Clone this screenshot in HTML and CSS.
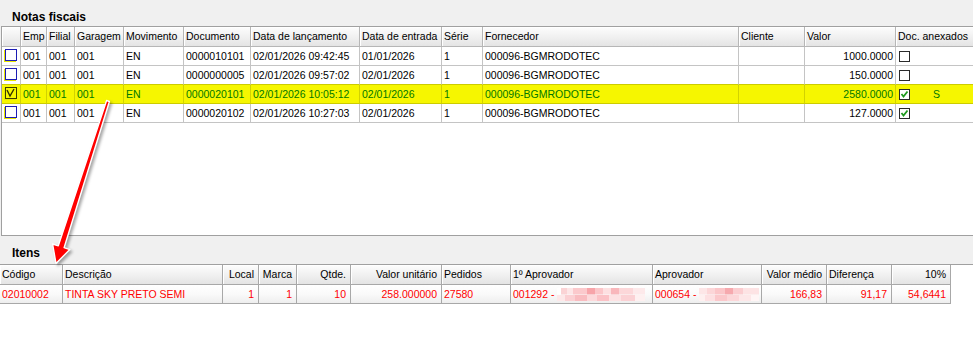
FILE: index.html
```html
<!DOCTYPE html>
<html lang="pt-BR">

<head>
    <meta charset="UTF-8">
    <title>Notas fiscais</title>
    <link rel="stylesheet" href="styles.css">
</head>

<body>
    <div class="sectionTitle">Notas fiscais</div>

    <div class="notas">
        <div class="row head">
            <div class="c ind"></div>
            <div class="c emp">Emp</div>
            <div class="c fil">Filial</div>
            <div class="c gar">Garagem</div>
            <div class="c mov">Movimento</div>
            <div class="c doc">Documento</div>
            <div class="c dlan">Data de lançamento</div>
            <div class="c dent">Data de entrada</div>
            <div class="c ser">Série</div>
            <div class="c forn">Fornecedor</div>
            <div class="c cli">Cliente</div>
            <div class="c val">Valor</div>
            <div class="c anx">Doc. anexados</div>
        </div>

        <div class="row">
            <div class="c ind"><span class="mark"></span></div>
            <div class="c emp">001</div>
            <div class="c fil">001</div>
            <div class="c gar">001</div>
            <div class="c mov">EN</div>
            <div class="c doc">0000010101</div>
            <div class="c dlan">02/01/2026 09:42:45</div>
            <div class="c dent">01/01/2026</div>
            <div class="c ser">1</div>
            <div class="c forn">000096-BGMRODOTEC</div>
            <div class="c cli"></div>
            <div class="c val num">1000.0000</div>
            <div class="c anx"><span class="box"></span></div>
        </div>

        <div class="row">
            <div class="c ind"><span class="mark"></span></div>
            <div class="c emp">001</div>
            <div class="c fil">001</div>
            <div class="c gar">001</div>
            <div class="c mov">EN</div>
            <div class="c doc">0000000005</div>
            <div class="c dlan">02/01/2026 09:57:02</div>
            <div class="c dent">02/01/2026</div>
            <div class="c ser">1</div>
            <div class="c forn">000096-BGMRODOTEC</div>
            <div class="c cli"></div>
            <div class="c val num">150.0000</div>
            <div class="c anx"><span class="box"></span></div>
        </div>

        <div class="row selected">
            <div class="c ind">
                <span class="mark on">
                    <svg width="10" height="10" viewBox="0 0 10 10">
                        <path d="M1 2 L4 8 L8 1" fill="none" stroke="#2f3000" stroke-width="1.4" />
                    </svg>
                </span>
            </div>
            <div class="c emp">001</div>
            <div class="c fil">001</div>
            <div class="c gar">001</div>
            <div class="c mov">EN</div>
            <div class="c doc">0000020101</div>
            <div class="c dlan">02/01/2026 10:05:12</div>
            <div class="c dent">02/01/2026</div>
            <div class="c ser">1</div>
            <div class="c forn">000096-BGMRODOTEC</div>
            <div class="c cli"></div>
            <div class="c val num">2580.0000</div>
            <div class="c anx">
                <span class="box">
                    <svg width="9" height="9" viewBox="0 0 9 9">
                        <path d="M1.5 4 L3.5 6.5 L7.5 1.5" fill="none" stroke="#1f9a1f" stroke-width="1.8" />
                    </svg>
                </span>
                <span class="flag">S</span>
            </div>
        </div>

        <div class="row">
            <div class="c ind"><span class="mark"></span></div>
            <div class="c emp">001</div>
            <div class="c fil">001</div>
            <div class="c gar">001</div>
            <div class="c mov">EN</div>
            <div class="c doc">0000020102</div>
            <div class="c dlan">02/01/2026 10:27:03</div>
            <div class="c dent">02/01/2026</div>
            <div class="c ser">1</div>
            <div class="c forn">000096-BGMRODOTEC</div>
            <div class="c cli"></div>
            <div class="c val num">127.0000</div>
            <div class="c anx">
                <span class="box">
                    <svg width="9" height="9" viewBox="0 0 9 9">
                        <path d="M1.5 4 L3.5 6.5 L7.5 1.5" fill="none" stroke="#1f9a1f" stroke-width="1.8" />
                    </svg>
                </span>
            </div>
        </div>
    </div>

    <div class="sectionTitle itensTitle">Itens</div>

    <div class="itens">
        <div class="row head">
            <div class="c cod">Código</div>
            <div class="c desc">Descrição</div>
            <div class="c loc num">Local</div>
            <div class="c mar num">Marca</div>
            <div class="c qtd num">Qtde.</div>
            <div class="c vun num">Valor unitário</div>
            <div class="c ped">Pedidos</div>
            <div class="c ap1">1º Aprovador</div>
            <div class="c ap2">Aprovador</div>
            <div class="c vme num">Valor médio</div>
            <div class="c dif">Diferença</div>
            <div class="c pct num">10%</div>
        </div>
        <div class="row item">
            <div class="c cod">02010002</div>
            <div class="c desc">TINTA SKY PRETO SEMI</div>
            <div class="c loc num">1</div>
            <div class="c mar num">1</div>
            <div class="c qtd num">10</div>
            <div class="c vun num">258.000000</div>
            <div class="c ped">27580</div>
            <div class="c ap1">001292 - <span class="blur blurA"></span></div>
            <div class="c ap2">000654 - <span class="blur blurB"></span></div>
            <div class="c vme num">166,83</div>
            <div class="c dif num">91,17</div>
            <div class="c pct num">54,6441</div>
        </div>
    </div>

    <svg class="arrow" width="973" height="350" viewBox="0 0 973 350">
        <polygon points="106.6,100.5 109.4,101.5 64.1,247.7 69.8,249.6 56,263.5 52.6,244.0 58.3,245.9"
            fill="#ff0000" stroke="#ffffff" stroke-width="1.4" stroke-linejoin="round" />
    </svg>
</body>

</html>
```

FILE: styles.css
```css
* {
    margin: 0px;
    padding: 0px;
    box-sizing: border-box;
}

body {
    position: relative;
    width: 973px;
    height: 350px;
    overflow: hidden;
    background-color: #f0f0f0;
    font-family: "Liberation Sans", Arial, sans-serif;
    font-size: 10.5px;
    color: #000;
}

.sectionTitle {
    height: 26px;
    padding: 10px 0 2px 12px;
    line-height: 14px;
    font-size: 12px;
    font-weight: bold;
}

.itensTitle {
    height: 28px;
    padding-top: 10px;
}

/* top grid */
.notas {
    margin-left: 1px;
    width: 1010px;
    height: 210px;
    border: 1px solid #a0a0a0;
    background-color: #fff;
}

.row {
    display: flex;
    height: 19px;
}

.row.head {
    height: 20px;
}

.c {
    flex: none;
    height: 100%;
    padding: 0 2px;
    line-height: 18px;
    white-space: nowrap;
    overflow: hidden;
    border-right: 1px solid #c4c4c4;
    border-bottom: 1px solid #c4c4c4;
}

.head .c {
    line-height: 19px;
    background: linear-gradient(#fdfdfd, #f1f1f1 50%, #e4e4e4);
    border-right: 1px solid #b6b6b6;
    border-bottom: 1px solid #b6b6b6;
    box-shadow: inset 1px 1px 0 #fff;
}

.num {
    text-align: right;
}

.ind { width: 19px; padding: 0; }
.emp { width: 26px; }
.fil { width: 28px; }
.gar { width: 49px; }
.mov { width: 60px; }
.doc { width: 67px; }
.dlan { width: 109px; }
.dent { width: 82px; }
.ser { width: 41px; }
.forn { width: 256px; }
.cli { width: 66px; }
.val { width: 91px; }
.anx { width: 120px; border-right: none; }

.selected .c {
    background-color: #f6f600;
    color: #007800;
    border-bottom-color: #cccc00;
    border-right-color: #d2d200;
}

.row:has(+ .selected) .c {
    border-bottom-color: #cccc00;
}

.mark {
    display: block;
    width: 12px;
    height: 12px;
    margin: 2px 0 0 3px;
    border: 1px solid #1c1cb4;
    background-color: #fff;
    box-shadow: -1px 1px 0 #e9e900;
}

.mark.on {
    border-color: #3a3a00;
    background-color: #f6f600;
}

.mark svg {
    display: block;
}

.box {
    display: inline-block;
    vertical-align: top;
    width: 11px;
    height: 11px;
    margin: 4px 0 0 1px;
    border: 1px solid #2a2a2a;
    background-color: #fff;
}

.box svg {
    display: block;
}

.flag {
    display: inline-block;
    margin-left: 20px;
}

/* bottom grid */
.itens {
    height: 86px;
    border-top: 1px solid #a0a0a0;
    background-color: #fff;
}

.itens .c {
    border-right-color: #a8a8a8;
    border-bottom-color: #a8a8a8;
}

.item .c {
    color: #ff0000;
    background: linear-gradient(#fff, #fafafa 50%, #eeeeee);
}

.cod { width: 63px; }
.desc { width: 160px; }
.loc { width: 36px; }
.mar { width: 38px; }
.qtd { width: 54px; }
.vun { width: 91px; }
.ped { width: 69px; }
.ap1 { width: 142px; }
.ap2 { width: 109px; }
.vme { width: 65px; }
.dif { width: 65px; }
.pct { width: 59px; }

.itens .num {
    padding-right: 4px;
}

.head .dif {
    text-align: left;
}

.blur {
    display: inline-block;
    vertical-align: top;
    margin-top: 3px;
    height: 13px;
}

.blurA {
    width: 88px;
    background:
        linear-gradient(90deg, #fff 0 4px, #fbd3d5 4px 10px, #fde6e7 10px 16px, #fbc9cc 16px 30px,
            #f7a4a9 30px 38px, #fbc6c9 38px 46px, #fde0e1 46px 54px, #f9b7bb 54px 62px, #fcd7d9 62px 76px,
            #fde9ea 76px 88px) top / 100% 50% no-repeat,
        linear-gradient(90deg, #fde8e9 0 8px, #fbd0d3 8px 18px, #f9bcc0 18px 30px, #fcd9db 30px 40px,
            #fbc2c6 40px 52px, #fde2e3 52px 64px, #fbd1d4 64px 78px, #fef0f0 78px 88px) bottom / 100% 50% no-repeat;
}

.blurB {
    width: 60px;
    background:
        linear-gradient(90deg, #fde6e7 0 8px, #fcd6d8 8px 16px, #fbc6c9 16px 26px, #f6a9ae 26px 34px,
            #fbcdd0 34px 44px, #fde3e4 44px 60px) top / 100% 50% no-repeat,
        linear-gradient(90deg, #fef0f0 0 6px, #fde0e2 6px 16px, #fbc8cb 16px 28px, #fcd7d9 28px 40px,
            #fde7e8 40px 52px, #fff5f5 52px 60px) bottom / 100% 50% no-repeat;
}

.arrow {
    position: absolute;
    left: 0;
    top: 0;
    pointer-events: none;
    filter: drop-shadow(2px 2px 1.5px rgba(0, 0, 0, 0.35));
}
```
